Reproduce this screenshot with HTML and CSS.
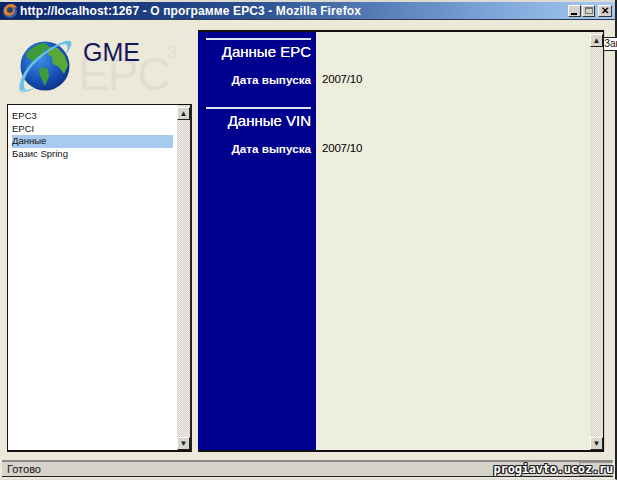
FILE: index.html
```html
<!DOCTYPE html>
<html lang="ru">
<head>
<meta charset="utf-8">
<title>О программе EPC3</title>
<link rel="stylesheet" href="styles.css">
</head>
<body>
<div class="window">
  <header class="titlebar">
    <svg class="fx" width="16" height="16" viewBox="0 0 16 16"><circle cx="8" cy="8" r="7" fill="#3a5fa8"/><path d="M2 10C1 5 5 1 9 1c3 0 5 2 6 4-2-1-3-1-4 0 2 1 2 4 0 6-2 2-6 3-9-1z" fill="#e8801c"/><circle cx="8" cy="7" r="3" fill="#24407f"/></svg>
    <span class="title">http://localhost:1267 - О программе EPC3 - Mozilla Firefox</span>
    <div class="controls">
      <span class="ctl"><i class="min"></i></span>
      <span class="ctl"><i class="max"></i></span>
      <span class="ctl close">✕</span>
    </div>
  </header>
  <div class="content">
    <aside class="left">
      <div class="logo">
        <svg class="globe" width="56" height="56" viewBox="0 0 56 56">
          <defs>
            <radialGradient id="sea" cx="0.4" cy="0.35" r="0.75"><stop offset="0" stop-color="#3f8fe4"/><stop offset="0.6" stop-color="#1650b8"/><stop offset="1" stop-color="#0b2a78"/></radialGradient>
          </defs>
          <circle cx="27" cy="28" r="24.5" fill="url(#sea)"/>
          <path d="M9 15c5-6 12-10 19-10l3 5-5 3-1 6-6 1-3 6-4-5-4-2z" fill="#3f9a3a"/>
          <path d="M30 9l10 1 7 8 3 9-4 9-5-7-6-3-1-7-5-3z" fill="#5aa83a"/>
          <path d="M22 29l8 2 1 7-4 10-3-6-3-7z" fill="#3f9a3a"/>
          <path d="M2 53C-1 45 7 29 21 18 33 9 47 1 52 3c3 1 1 7-4 13 2-6 2-10-1-10C41 6 27 15 16 26 7 36 4 46 7 51z" fill="#6cc0e8"/>
          <path d="M2 53c3 3 9 1 15-3-4 1-8 2-10 1z" fill="#8fd0ee"/>
        </svg>
        <span class="gme">GME</span>
        <span class="epc">EPC<sup>3</sup></span>
      </div>
      <div class="listbox">
        <ul class="list">
          <li>EPC3</li>
          <li>EPCI</li>
          <li class="selected">Данные</li>
          <li>Базис Spring</li>
        </ul>
        <div class="scrollbar">
          <span class="arrow">▲</span>
          <span class="track"></span>
          <span class="arrow">▼</span>
        </div>
      </div>
    </aside>
    <main class="frame">
      <div class="side">
        <section class="group">
          <h2>Данные EPC</h2>
          <p class="label">Дата выпуска</p>
        </section>
        <section class="group">
          <h2>Данные VIN</h2>
          <p class="label">Дата выпуска</p>
        </section>
      </div>
      <div class="values">
        <p class="value first">2007/10</p>
        <p class="value second">2007/10</p>
      </div>
      <div class="scrollbar">
        <span class="arrow">▲</span>
        <span class="track"></span>
        <span class="arrow">▼</span>
      </div>
    </main>
    <div class="rail"></div>
  </div>
  <footer class="status">
    <span>Готово</span>
    <span class="grip"></span>
  </footer>
  <span class="tip">Зак</span>
  <span class="mark">progiavto.ucoz.ru</span>
</div>
</body>
</html>
```
FILE: styles.css
```css
* { box-sizing: border-box; }
html, body { margin: 0; padding: 0; }
body { width: 617px; height: 480px; overflow: hidden; background: #ece9d8; font-family: "Liberation Sans", Arial, sans-serif; }
.window { position: relative; width: 617px; height: 480px; display: flex; flex-direction: column; padding-bottom: 2px; background: #ece9d8; border-right: 2px solid #222; border-bottom: 1px solid #ddd; }
.titlebar { height: 20px; flex: none; display: flex; align-items: center; padding: 0 0 0 2px; background: linear-gradient(90deg, #0a246a 0%, #2a4f8f 40%, #7da5d8 80%, #a6caf0 100%); border-top: 2px solid #dedcd2; border-bottom: 1px solid #2b3a55; }
.fx { flex: none; margin-right: 2px; }
.title { flex: 1; color: #fff; font: bold 12px "Liberation Sans", Arial, sans-serif; white-space: nowrap; letter-spacing: 0.12px; }
.controls { display: flex; margin-right: 3px; }
.ctl { position: relative; width: 13px; height: 12px; margin-left: 1px; background: #d4d0c8; border: 1px solid; border-color: #fff #333 #333 #fff; display: flex; justify-content: center; font-size: 10px; line-height: 10px; font-weight: bold; color: #000; }
.close { width: 14px; margin-left: 3px; }
.ctl i { display: block; }
.min { width: 6px; height: 2px; background: #000; margin-top: 7px; margin-right: 2px; }
.max { width: 8px; height: 7px; border: 1px solid #777; border-top-width: 2px; margin-top: 1px; }
.content { flex: 1; min-height: 0; display: flex; padding: 10px 0 8px 7px; }
.left { width: 185px; flex: none; display: flex; flex-direction: column; }
.logo { position: relative; height: 74px; flex: none; }
.globe { position: absolute; left: 11px; top: 8px; }
.gme { position: absolute; left: 76px; top: 8px; font-size: 25px; line-height: 28px; color: #15175a; z-index: 1; }
.epc { position: absolute; left: 71px; top: 19px; font-size: 46px; line-height: 50px; color: #e0ded4; letter-spacing: -1px; z-index: 0; }
.epc sup { position: absolute; top: -5px; left: 90px; font-size: 16px; line-height: 18px; }
.listbox { flex: 1; display: flex; background: #fff; border: 1px solid #111; border-right: 2px solid #222; border-bottom: 2px solid #111; min-height: 0; }
.list { flex: 1; list-style: none; margin: 0; padding: 5px 4px 0 4px; font-size: 9.5px; color: #111; }
.list li { height: 12.5px; line-height: 12px; }
.list .selected { background: #a6cbef; }
.scrollbar { width: 13px; flex: none; display: flex; flex-direction: column; padding-top: 2px; background: repeating-conic-gradient(#d4d0c8 0 25%, #f2f0ea 0 50%) 0 0 / 2px 2px; }
.arrow { height: 13px; flex: none; background: #d8d5cb; border: 1px solid; border-color: #fff #222 #222 #fff; font-size: 8px; line-height: 11px; text-align: center; color: #222; }
.track { flex: 1; }
.frame { width: 406px; margin-left: 6px; flex: none; display: flex; background: #eeeedf; border-top: 2px solid #111; border-right: 1px solid #111; border-bottom: 2px solid #111; }
.side { width: 118px; flex: none; background: #00008f; color: #fff; padding: 6px 5px 0 8px; }
.group { border-top: 2px solid #dfe6f5; height: 69px; text-align: right; }
.group h2 { margin: 0; font-size: 15px; line-height: 16px; font-weight: normal; padding-top: 4px; height: 24px; text-shadow: 0 0 0.5px #fff; }
.label { margin: 0; padding-top: 9px; font-size: 11.7px; line-height: 13px; font-weight: bold; }
.values { flex: 1; padding-left: 6px; }
.value { margin: 0; font-size: 11.5px; line-height: 13px; color: #000; letter-spacing: -0.2px; }
.first { padding-top: 41px; }
.second { padding-top: 56px; }
.rail { width: 12px; flex: none; border-left: 1px solid #d4d0c8; }
.status { height: 17px; flex: none; display: flex; align-items: center; justify-content: space-between; margin: 0 2px; padding-left: 5px; background: #d6d3cb; border-top: 2px solid #888; border-bottom: 1px solid #222; font-size: 11px; color: #111; }
.grip { width: 34px; height: 14px; border: 1px solid #9a9a94; border-right-color: #eee; }
.tip { position: absolute; left: 604px; right: -2px; top: 37px; height: 14px; overflow: hidden; white-space: nowrap; background: #fff; border: 1px solid #222; border-width: 1px 0; font-size: 10px; line-height: 12px; color: #111; }
.mark { position: absolute; right: 2px; top: 462px; font: bold 12px "DejaVu Sans Mono", monospace; color: #fff; letter-spacing: -0.2px; text-shadow: 1px 0 0 #222, -1px 0 0 #222, 0 1px 0 #222, 0 -1px 0 #222, 1px 1px 0 #222, -1px -1px 0 #222, 1px -1px 0 #222, -1px 1px 0 #222; }
```
